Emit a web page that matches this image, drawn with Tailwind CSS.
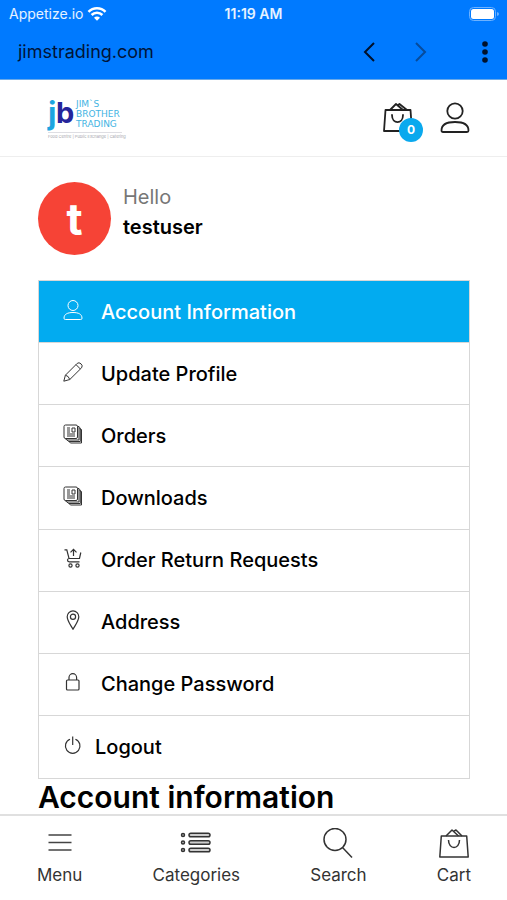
<!DOCTYPE html>
<html lang="en">
<head>
<meta charset="utf-8">
<meta name="viewport" content="width=device-width, initial-scale=1">
<title>Account</title>
<script src="https://cdn.jsdelivr.net/npm/@tailwindcss/browser@4"></script>
</head>
<body class="flex h-screen flex-col overflow-hidden bg-white font-['Inter',sans-serif] text-black">

<div class="shrink-0 border-b border-[#6aa9e8] bg-[#007aff]">
  <div class="grid h-7 grid-cols-3 items-center px-2 text-sm text-white/90">
    <div class="flex items-center gap-1 pl-px">
      <span>Appetize.io</span>
      <svg class="h-4 w-5" viewBox="0 0 20 16" fill="none" stroke="white" stroke-width="2.6" aria-hidden="true"><path d="M1.5 5.800a12 12 0 0 1 17 0"/><path d="M4.600 9a7.600 7.600 0 0 1 10.800 0"/><path d="M10 14.800l-3-3a4.200 4.200 0 0 1 6 0z" fill="white" stroke="none"/></svg>
    </div>
    <span class="text-center font-semibold">11:19 AM</span>
    <svg class="h-4 w-8 justify-self-end" viewBox="0 0 32 16" aria-hidden="true"><rect x="2.500" y="1.500" width="26" height="13" rx="4" fill="none" stroke="#6db2ff"/><rect x="4" y="3" width="23" height="10" rx="2.500" fill="white"/><path d="M30 6v4q2-.6 2-2t-2-2z" fill="#6db2ff"/></svg>
  </div>
  <div class="flex h-[51px] items-center pr-3 pb-1 pl-[18px]">
    <span class="flex-1 text-lg text-[#001438]">jimstrading.com</span>
    <button class="mr-6 grid size-7 place-items-center" aria-label="Back"><svg class="h-5 w-3" viewBox="0 0 12 20" fill="none" stroke="#00112b" stroke-width="2"><path d="M11 1L2 10l9 9"/></svg></button>
    <button class="mr-10 grid size-7 place-items-center" aria-label="Forward" disabled><svg class="h-5 w-3" viewBox="0 0 12 20" fill="none" stroke="#074b9b" stroke-width="2"><path d="M1 1l9 9-9 9"/></svg></button>
    <button class="grid h-7 w-5 place-items-center" aria-label="More options"><svg class="h-6 w-2" viewBox="0 0 8 24" fill="#00112b"><circle cx="4" cy="4" r="2.800"/><circle cx="4" cy="12" r="2.800"/><circle cx="4" cy="20" r="2.800"/></svg></button>
  </div>
</div>

<header class="flex h-[77px] shrink-0 items-center justify-between border-b border-[#eeeeee] pr-[37px] pl-[47px]">
  <a href="#" aria-label="Jim's Brother Trading">
    <svg class="h-14 w-20" viewBox="0 -6 80 56" font-family="Inter, sans-serif">
      <text x="1" y="28" font-size="31" font-weight="700" fill="#1da5e0">j</text>
      <text x="9" y="27" font-size="29" font-weight="700" fill="#25259b">b</text>
      <g fill="#43b4e3" font-family="'DejaVu Sans', sans-serif" font-size="9">
        <text x="29" y="11">JIM`S</text>
        <text x="29" y="21">BROTHER</text>
        <text x="29" y="31">TRADING</text>
      </g>
      <path d="M1 36.500h74" stroke="#d5d5dc" stroke-width=".8"/>
      <text x="1" y="42" font-size="4" fill="#a4a4ac">Food Centre | Public Exchange | Catering</text>
    </svg>
  </a>
  <div class="flex items-center gap-4">
    <a href="#" class="relative" aria-label="Cart, 0 items">
      <svg class="h-8 w-10" viewBox="0 0 40 32" fill="none" stroke="#222" stroke-width="1.800" stroke-linejoin="round" stroke-linecap="round"><path d="M3.500 8h25l1.500 21H2z"/><path d="M8 8l6-6L21 8M15.500 3.500l2-1.500L25 8"/><path d="M10 13c0 9.500 11 9.500 11 0"/></svg>
      <span class="absolute top-4 left-[17px] grid size-6 place-items-center rounded-full bg-[#0aa9ee] text-xs font-bold text-white">0</span>
    </a>
    <a href="#" aria-label="My account">
      <svg class="size-8" viewBox="0 0 32 32" fill="none" stroke="#222" stroke-width="1.800"><circle cx="17" cy="9" r="7.700"/><path d="M3.500 28.500c0-6 5-8.500 13.500-8.500s13.500 2.500 13.500 8.500q0 1.500-1.500 1.500H5q-1.500 0-1.500-1.500z"/></svg>
    </a>
  </div>
</header>

<main class="min-h-0 flex-1 overflow-hidden pt-[25px] pr-[37px] pl-[38px]">
  <section class="flex gap-3">
    <div class="grid size-[73px] place-items-center rounded-full bg-[#f64336] text-[44px] leading-none font-bold text-white">t</div>
    <div class="text-xl leading-[30px]">
      <p class="text-[#777]">Hello</p>
      <p class="font-semibold">testuser</p>
    </div>
  </section>

  <nav class="mt-[25px] grid h-[499px] grid-rows-8 border border-[#d7d7d7] text-xl leading-6 font-medium" aria-label="Account">
    <a href="#" class="flex items-center border-b border-[#d7d7d7] bg-[#02abf0] pl-6 text-white"><svg class="mr-[18px] mb-1 size-5" viewBox="0 0 20 20" fill="none" stroke="currentColor"><circle cx="10" cy="5.500" r="5"/><path d="M1 18.200c0-4 3.500-5.700 9-5.700s9 1.700 9 5.700q0 1.300-1.300 1.300H2.300Q1 19.500 1 18.200z"/></svg>Account Information</a>
    <a href="#" class="flex items-center border-b border-[#d7d7d7] pl-6"><svg class="mr-[18px] mb-1 size-5" viewBox="0 0 20 20" fill="none" stroke="#333" stroke-linejoin="round"><path d="M.8 19.200l1.600-6L14.200 1.400q1.700-1.500 3.800.4t.6 4L6.800 17.500zM13 2.600l4.400 4.400M2.500 13.200q3.300.8 4.200 4.200"/></svg>Update Profile</a>
    <a href="#" class="flex items-center border-b border-[#d7d7d7] pl-6"><svg class="mr-[18px] mb-1 size-5" viewBox="0 0 20 20" fill="none" stroke="#333"><rect x="1" y="1" width="13.500" height="13.500" rx="1.500"/><path d="M14.500 2.500H16v13.500H4l-2-1.500M16 4h1.300v13.500H5.800L4 16M17.300 5.500h1.200v13.500H7.800l-2-1.500"/><path d="M4 4h3M4 6h3M4 8h3M4 10h8M4 12h8"/><path d="M9 4h3v4H9z"/></svg>Orders</a>
    <a href="#" class="flex items-center border-b border-[#d7d7d7] pl-6"><svg class="mr-[18px] mb-1 size-5" viewBox="0 0 20 20" fill="none" stroke="#333"><rect x="1" y="1" width="13.500" height="13.500" rx="1.500"/><path d="M14.500 2.500H16v13.500H4l-2-1.500M16 4h1.300v13.500H5.800L4 16M17.300 5.500h1.200v13.500H7.800l-2-1.500"/><path d="M4 4h3M4 6h3M4 8h3M4 10h8M4 12h8"/><path d="M9 4h3v4H9z"/></svg>Downloads</a>
    <a href="#" class="flex items-center border-b border-[#d7d7d7] pl-6"><svg class="mr-[18px] mb-1 size-5" viewBox="0 0 20 20" fill="none" stroke="#333" stroke-width="1.200"><path d="M1.500 1.800h2.300L6 10.500h10.500l1.300-6M6 10.500q-1.500.2-1.500 1.600 0 1.700 1.700 1.700h10.300M10.500 8V1.500M7.500 4.300l3-3 3 3"/><circle cx="7.500" cy="17.500" r="1.600"/><circle cx="14.500" cy="17.500" r="1.600"/></svg>Order Return Requests</a>
    <a href="#" class="flex items-center border-b border-[#d7d7d7] pl-6"><svg class="mr-[18px] mb-1 size-5" viewBox="0 0 20 20" fill="none" stroke="#333" stroke-width="1.200"><path d="M10 19.300C7.300 14.500 4.200 10.500 4.200 6.700a5.800 5.800 0 0 1 11.600 0c0 3.800-3.100 7.800-5.800 12.600z"/><circle cx="10" cy="6.700" r="2.600"/></svg>Address</a>
    <a href="#" class="flex items-center border-b border-[#d7d7d7] pl-6"><svg class="mr-[18px] mb-1 size-5" viewBox="0 0 20 20" fill="none" stroke="#333" stroke-width="1.200"><rect x="3.500" y="8" width="12.500" height="10" rx="1"/><path d="M6 8V5.500a3.800 3.800 0 0 1 7.600 0V8"/></svg>Change Password</a>
    <a href="#" class="flex items-center pl-6"><svg class="mr-3 mb-1 size-5" viewBox="0 0 20 20" fill="none" stroke="#333" stroke-width="1.200"><path d="M7 4.200a7.300 7.300 0 1 0 5.400 0M9.700 1.500V10"/></svg>Logout</a>
  </nav>

  <h1 class="text-3xl leading-9 font-semibold">Account information</h1>
</main>

<nav class="flex h-[86px] shrink-0 justify-between border-t-2 border-[#e0e0e0] bg-white pt-3 pr-9 pl-[37px] text-[17px] leading-6 text-[#333]" aria-label="Main">
  <a href="#" class="flex flex-col items-center gap-[3px]"><svg class="size-8" viewBox="0 0 32 32" fill="none" stroke="#444" stroke-width="1.500"><path d="M4.500 7h23M4.500 14.500h23M4.500 22h23"/></svg>Menu</a>
  <a href="#" class="flex flex-col items-center gap-[3px]"><svg class="size-8" viewBox="0 0 32 32" fill="#ccc" stroke="#333" stroke-width="1.500"><circle cx="3" cy="7" r="1.500"/><circle cx="3" cy="14.500" r="1.500"/><circle cx="3" cy="22" r="1.500"/><rect x="9" y="5.200" width="21" height="3.600" rx="1.800"/><rect x="9" y="12.700" width="21" height="3.600" rx="1.800"/><rect x="9" y="20.200" width="21" height="3.600" rx="1.800"/></svg>Categories</a>
  <a href="#" class="flex flex-col items-center gap-[3px]"><svg class="size-8" viewBox="0 0 32 32" fill="none" stroke="#333" stroke-width="1.500"><circle cx="13" cy="11.500" r="11"/><path d="M20.500 19.500L30 29.500"/></svg>Search</a>
  <a href="#" class="flex flex-col items-center gap-[3px]"><svg class="size-8" viewBox="0 0 32 32" fill="none" stroke="#333" stroke-width="1.500" stroke-linejoin="round"><path d="M3.300 8h25.400l1.500 21H1.800z"/><path d="M8 8l6-6 6.500 6M15.500 3.500l2.500-1.500L24 8"/><path d="M10.500 12c0 10 11 10 11 0"/></svg>Cart</a>
</nav>
</body>
</html>
